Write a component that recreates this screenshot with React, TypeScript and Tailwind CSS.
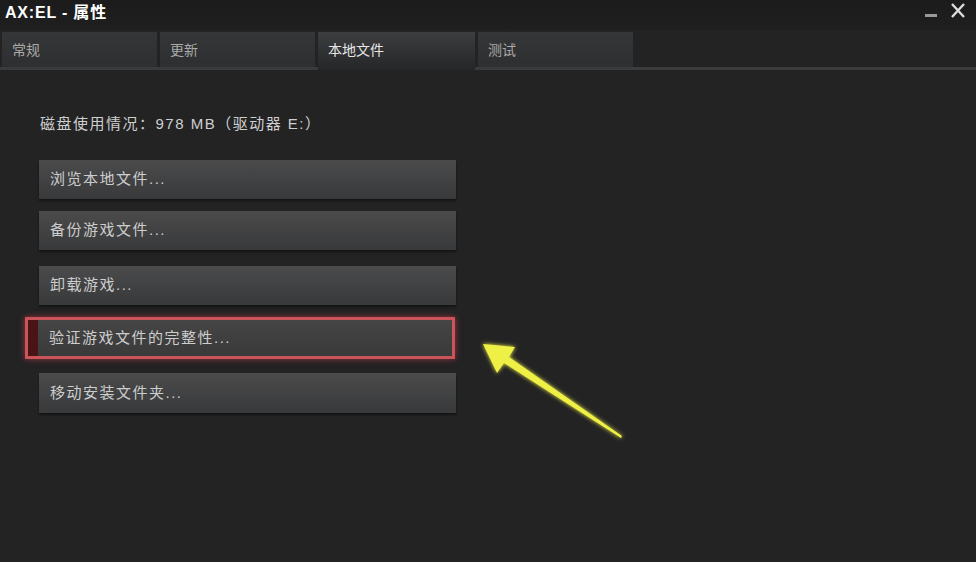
const TABS = [
  { label: '常规', w: 'w-[155px]' },
  { label: '更新', w: 'w-[155px]' },
  { label: '本地文件', w: 'w-[157px]', active: true },
  { label: '测试', w: 'w-[155px]' },
];

const FONT = { fontFamily: '"Liberation Sans", "Noto Sans CJK SC", sans-serif' };

function ActionButton({ label }: { label: string }) {
  return (
    <div className="h-full flex-1 flex items-center pl-[11px] bg-gradient-to-b from-[#4b4b4c] to-[#38393a] text-[15px] tracking-[1.5px] text-[#cdcdcd] shadow-[0_2px_2px_rgba(0,0,0,0.45)]">
      {label}
    </div>
  );
}

export default function App() {
  return (
    <div style={FONT} className="relative w-[976px] h-[562px] overflow-hidden bg-[#232324] flex flex-col">
      {/* title bar */}
      <div className="h-[30px] shrink-0 flex items-start justify-between pl-[5px] pr-[10px] pt-[1px] bg-gradient-to-b from-[#1b1b1c] to-[#1f1f20]">
        <span className="text-[16px] font-bold text-white tracking-[0.8px]">AX:EL - 属性</span>
        <div className="flex items-start gap-[12px] pt-[2px]">
          <svg width="14" height="16" viewBox="0 0 14 16">
            <rect x="1" y="11" width="12" height="3" fill="#9a9a9a" />
          </svg>
          <svg width="16" height="16" viewBox="0 0 16 16">
            <path d="M2 1 L14 14 M14 1 L2 14" stroke="#dcdcdc" strokeWidth="2.4" />
          </svg>
        </div>
      </div>

      {/* tabs */}
      <div className="h-[40px] shrink-0 flex items-start gap-[3px] pl-[2px] pt-[2px] border-b-[3px] border-[#3a3b3c]">
        {TABS.map(t =>
          t.active ? (
            <div
              key={t.label}
              className={`${t.w} h-[38px] -mb-[3px] flex items-center pl-[10px] pb-[1px] bg-gradient-to-b from-[#3d3e40] to-[#252627] text-[14px] text-[#e6e6e6]`}
            >
              {t.label}
            </div>
          ) : (
            <div
              key={t.label}
              className={`${t.w} h-[35px] flex items-center pl-[10px] pt-[2px] bg-gradient-to-b from-[#353637] to-[#2e2f30] text-[14px] text-[#a9a9a9]`}
            >
              {t.label}
            </div>
          )
        )}
      </div>

      {/* local files page */}
      <div className="flex flex-col pl-[39px] pt-[43px]">
        <p className="text-[15px] tracking-[1.5px] text-[#cfcfcf] leading-[22px] ml-[1px]">磁盘使用情况：978 MB（驱动器 E:）</p>

        <div className="w-[417px] h-[39px] mt-[25px] flex"><ActionButton label="浏览本地文件..." /></div>
        <div className="w-[417px] h-[39px] mt-[12px] flex"><ActionButton label="备份游戏文件..." /></div>
        <div className="w-[417px] h-[39px] mt-[16px] flex"><ActionButton label="卸载游戏..." /></div>

        <div className="-ml-[14px] w-[430px] h-[42px] mt-[12px] flex border-[3px] border-[#c9555b] bg-[#4a1414] pl-[10px] shadow-[0_0_6px_rgba(200,60,70,0.7)]">
          <div className="h-full flex-1 flex items-center pl-[11px] bg-gradient-to-b from-[#454546] to-[#3a3a3b] text-[15px] tracking-[1.5px] text-[#cdcdcd]">
            验证游戏文件的完整性...
          </div>
        </div>

        <div className="w-[417px] h-[40px] mt-[14px] flex"><ActionButton label="移动安装文件夹..." /></div>
      </div>

      {/* annotation arrow */}
      <svg className="absolute left-0 top-0 pointer-events-none" width="976" height="562" viewBox="0 0 976 562">
        <defs>
          <filter id="glow" x="-20%" y="-20%" width="140%" height="140%">
            <feGaussianBlur stdDeviation="2" result="b" />
            <feMerge>
              <feMergeNode in="b" />
              <feMergeNode in="SourceGraphic" />
            </feMerge>
          </filter>
        </defs>
        <polygon
          filter="url(#glow)"
          fill="#eef045"
          points="483,344 515,347 509,357 622,436 621,438 504,363 497,373"
        />
      </svg>
    </div>
  );
}
